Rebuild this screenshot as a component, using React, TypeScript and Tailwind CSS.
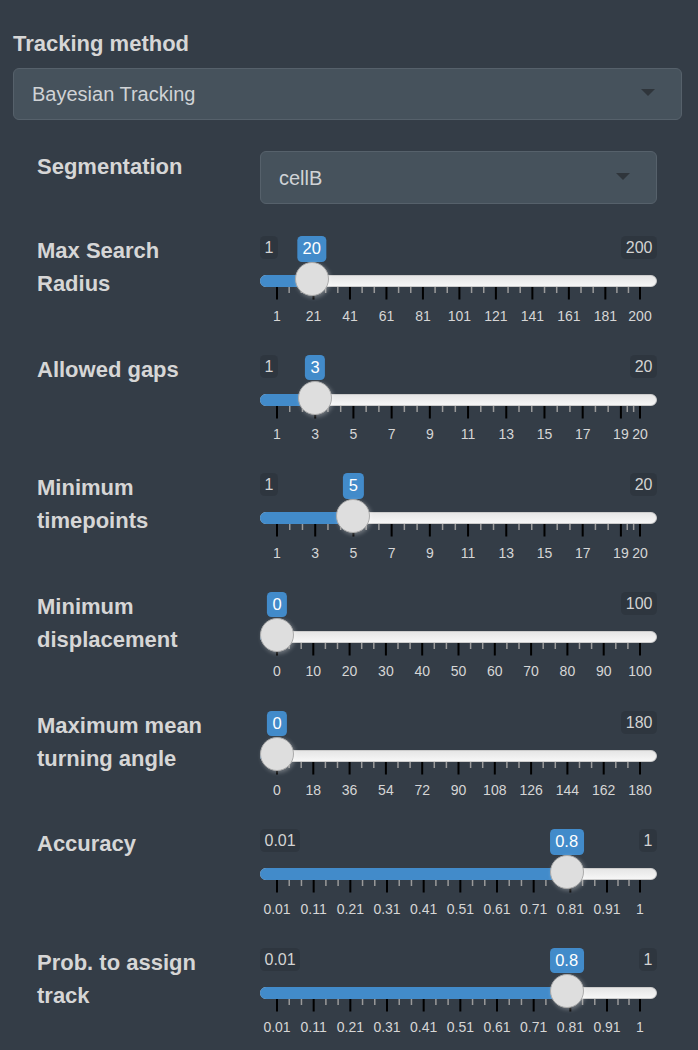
import type { ReactNode } from 'react'

const TRACK_W = 397
const HALF = 17
const RANGE = TRACK_W - HALF * 2

type SliderRow = {
  label: string
  min: number
  max: number
  value: number
  ticks: number[]
}

const odd = [1, 3, 5, 7, 9, 11, 13, 15, 17, 19, 20]
const prob = [0.01, 0.11, 0.21, 0.31, 0.41, 0.51, 0.61, 0.71, 0.81, 0.91, 1]

const rows: SliderRow[] = [
  { label: 'Max Search Radius', min: 1, max: 200, value: 20, ticks: [1, 21, 41, 61, 81, 101, 121, 141, 161, 181, 200] },
  { label: 'Allowed gaps', min: 1, max: 20, value: 3, ticks: odd },
  { label: 'Minimum timepoints', min: 1, max: 20, value: 5, ticks: odd },
  { label: 'Minimum displacement', min: 0, max: 100, value: 0, ticks: [0, 10, 20, 30, 40, 50, 60, 70, 80, 90, 100] },
  { label: 'Maximum mean turning angle', min: 0, max: 180, value: 0, ticks: [0, 18, 36, 54, 72, 90, 108, 126, 144, 162, 180] },
  { label: 'Accuracy', min: 0.01, max: 1, value: 0.8, ticks: prob },
  { label: 'Prob. to assign track', min: 0.01, max: 1, value: 0.8, ticks: prob },
]

function Select({ value, className }: { value: string; className: string }) {
  return (
    <div
      className={`flex items-center justify-between rounded-[6px] border border-[#56616b] bg-[#46525c] pl-[18px] pr-[26px] text-[20px] text-[#d0d3d6] ${className}`}
    >
      <span>{value}</span>
      <span className="-mt-[2px] h-0 w-0 border-x-[7px] border-t-[7px] border-x-transparent border-t-[#2f353b]" />
    </div>
  )
}

function Label({ children }: { children: ReactNode }) {
  return <div className="w-[190px] text-[22px] font-bold leading-[33px] text-[#d6d6d6]">{children}</div>
}

function Slider({ min, max, value, ticks }: SliderRow) {
  const at = (v: number) => HALF + (RANGE * (v - min)) / (max - min)
  const hx = at(value)
  const hideMin = value === min

  const smalls: number[] = []
  for (let i = 1; i < ticks.length; i++) {
    const a = at(ticks[i - 1])
    const b = at(ticks[i])
    smalls.push(a + (b - a) / 3, a + ((b - a) * 2) / 3)
  }

  return (
    <div className="relative w-[397px]">
      <div className="flex h-[23px] justify-between text-[16px] leading-[23px] text-[#d3d3d3]">
        <span className={`rounded-[4.5px] bg-black/10 px-[4.5px] ${hideMin ? 'invisible' : ''}`}>{min}</span>
        <span className="rounded-[4.5px] bg-black/10 px-[4.5px]">{max}</span>
      </div>

      <div className="relative mt-[16px] h-[12px] rounded-full border border-[#cccccc] bg-[linear-gradient(to_bottom,#dddddd_-50%,#ffffff_150%)]">
        <div className="absolute -left-px -top-px h-[12px] rounded-l-full bg-[#428bca]" style={{ width: hx }} />
      </div>

      <svg width={TRACK_W} height={13} className="block">
        {smalls.map((x, i) => (
          <line key={'s' + i} x1={x} x2={x} y1={0} y2={6} stroke="#9a9a9a" strokeWidth={1.5} />
        ))}
        {ticks.map((t) => (
          <line key={'b' + t} x1={at(t)} x2={at(t)} y1={0} y2={12.5} stroke="#000" strokeWidth={2} />
        ))}
      </svg>

      <div className="relative mt-[8.5px] h-[16px] text-[14px] leading-[14px] text-[#d6d6d6]">
        {ticks.map((t) => (
          <span key={'t' + t} className="absolute top-0 -translate-x-1/2 whitespace-nowrap" style={{ left: at(t) }}>
            {t}
          </span>
        ))}
      </div>

      <span
        className="absolute top-0 h-[25.5px] -translate-x-1/2 rounded-[4.5px] bg-[#428bca] px-[5.5px] text-[16.5px] leading-[25.5px] text-white"
        style={{ left: hx }}
      >
        {value}
      </span>
      <span
        className="absolute top-[26px] size-[34px] -translate-x-1/2 rounded-full border-[1.5px] border-[#ababab] bg-[#dedede] shadow-[1.5px_1.5px_4.5px_rgba(255,255,255,0.3)]"
        style={{ left: hx }}
      />
    </div>
  )
}

export default function App() {
  return (
    <div className="h-[1050px] w-[698px] overflow-hidden bg-[#343d47] pl-[13px] pr-[16px] pt-[27px] font-['Liberation_Sans',Arial,Helvetica,sans-serif]">
      <div className="text-[22px] font-bold leading-[33px] text-[#d6d6d6]">Tracking method</div>
      <Select value="Bayesian Tracking" className="mt-[7.5px] h-[52px]" />

      <div className="mt-[31.5px] pl-[24px] pr-[25px]">
        <div className="grid h-[83px] grid-cols-[223px_397px]">
          <div className="-mt-[1px]">
            <Label>Segmentation</Label>
          </div>
          <Select value="cellB" className="h-[53px]" />
        </div>

        {rows.map((r) => (
          <div key={r.label} className="grid h-[118.67px] grid-cols-[223px_397px]">
            <Label>{r.label}</Label>
            <div className="pt-[2px]">
              <Slider {...r} />
            </div>
          </div>
        ))}
      </div>
    </div>
  )
}
